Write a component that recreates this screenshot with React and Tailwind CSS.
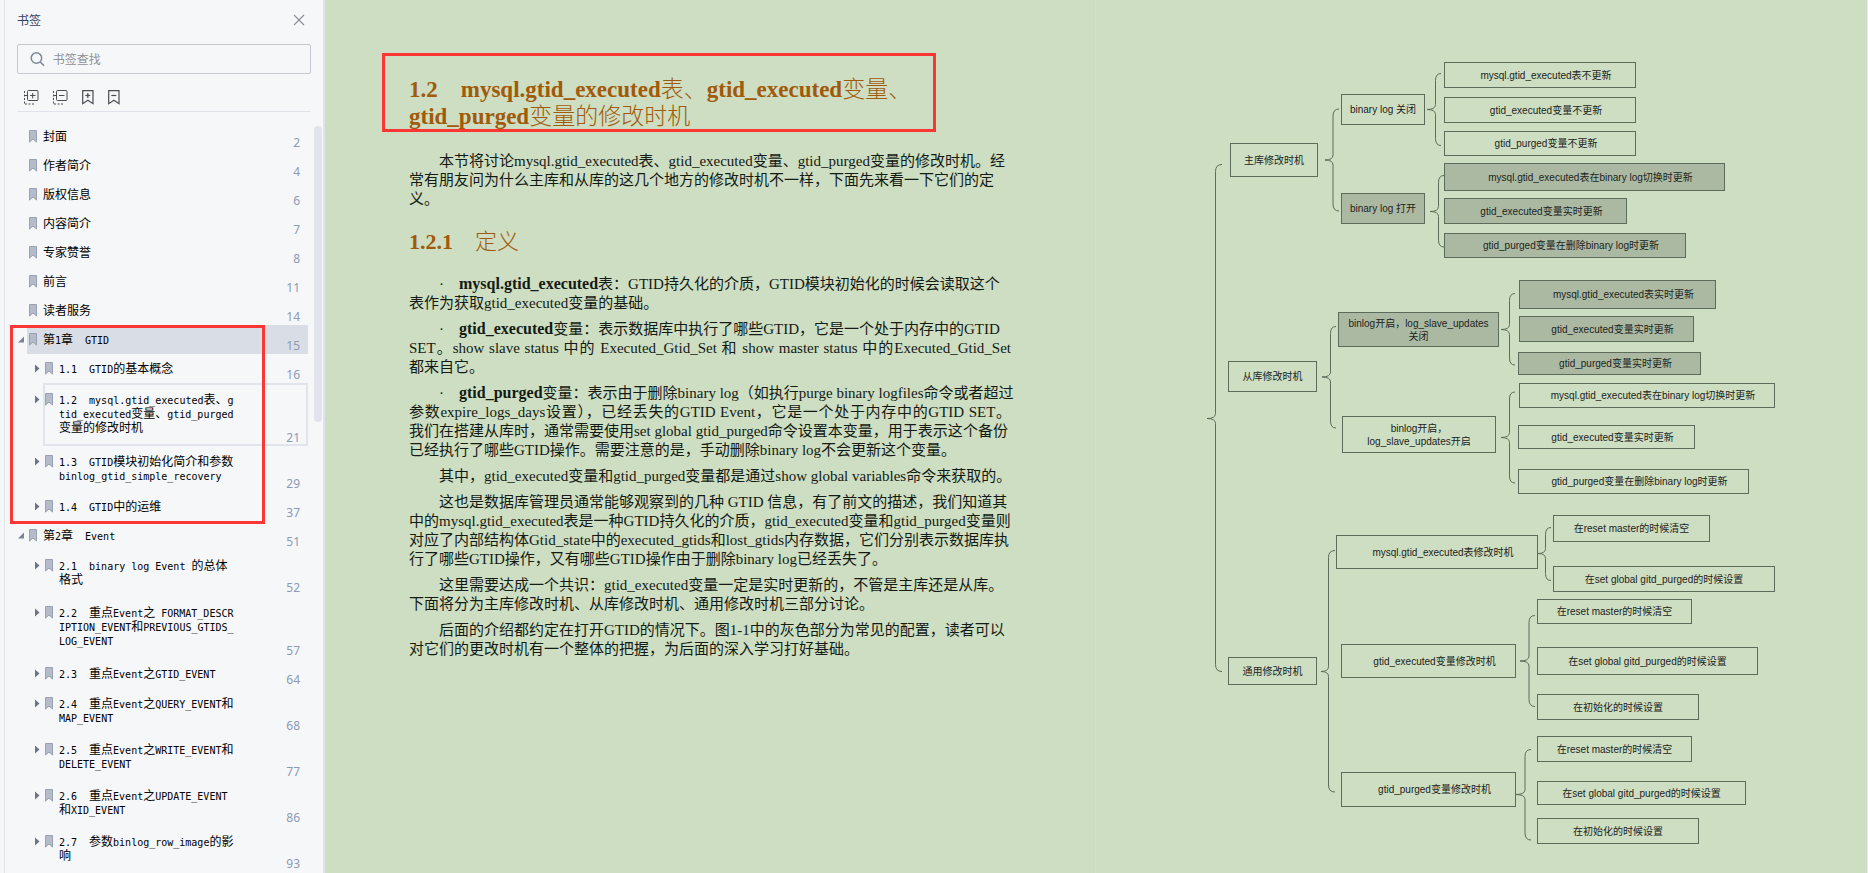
import { useState } from "react";

const bookmarks = [
  { title: "封面", page: 2, lines: 1 },
  { title: "作者简介", page: 4, lines: 1 },
  { title: "版权信息", page: 6, lines: 1 },
  { title: "内容简介", page: 7, lines: 1 },
  { title: "专家赞誉", page: 8, lines: 1 },
  { title: "前言", page: 11, lines: 1 },
  { title: "读者服务", page: 14, lines: 1 },
  {
    title: "第1章　GTID",
    page: 15,
    lines: 1,
    active: true,
    marked: true,
    children: [
      { title: "1.1　GTID的基本概念", page: 16, lines: 1 },
      {
        title: "1.2　mysql.gtid_executed表、gtid_executed变量、gtid_purged变量的修改时机",
        page: 21,
        lines: 3,
        focused: true,
      },
      { title: "1.3　GTID模块初始化简介和参数binlog_gtid_simple_recovery", page: 29, lines: 2 },
      { title: "1.4　GTID中的运维", page: 37, lines: 1 },
    ],
  },
  {
    title: "第2章　Event",
    page: 51,
    lines: 1,
    children: [
      { title: "2.1　binary log Event 的总体格式", page: 52, lines: 2 },
      { title: "2.2　重点Event之 FORMAT_DESCRIPTION_EVENT和PREVIOUS_GTIDS_LOG_EVENT", page: 57, lines: 3 },
      { title: "2.3　重点Event之GTID_EVENT", page: 64, lines: 1 },
      { title: "2.4　重点Event之QUERY_EVENT和MAP_EVENT", page: 68, lines: 2 },
      { title: "2.5　重点Event之WRITE_EVENT和DELETE_EVENT", page: 77, lines: 2 },
      { title: "2.6　重点Event之UPDATE_EVENT和XID_EVENT", page: 86, lines: 2 },
      { title: "2.7　参数binlog_row_image的影响", page: 93, lines: 2 },
    ],
  },
];

const rowHeight = { 1: "h-[29px]", 2: "h-[46px]", 3: "h-[63px]" };
const rowPad = { 1: "pt-2", 2: "pt-[9px]", 3: "pt-[10px]" };

// x, y, w, h on the diagram canvas
const nodes = [
  { x: 30, y: 87, w: 88, h: 34, text: "主库修改时机" },
  { x: 141, y: 38, w: 84, h: 31, text: "binary log 关闭" },
  { x: 141, y: 137, w: 84, h: 31, text: "binary log 打开", gray: true },
  { x: 244, y: 6, w: 192, h: 26, text: "mysql.gtid_executed表不更新", indent: true },
  { x: 244, y: 41, w: 192, h: 26, text: "gtid_executed变量不更新", indent: true },
  { x: 244, y: 75, w: 192, h: 25, text: "gtid_purged变量不更新", indent: true },
  { x: 244, y: 107, w: 281, h: 28, text: "mysql.gtid_executed表在binary log切换时更新", gray: true, indent: true },
  { x: 244, y: 142, w: 183, h: 26, text: "gtid_executed变量实时更新", gray: true, indent: true },
  { x: 244, y: 177, w: 242, h: 25, text: "gtid_purged变量在删除binary log时更新", gray: true, indent: true },

  { x: 28, y: 305, w: 89, h: 31, text: "从库修改时机" },
  { x: 138, y: 256, w: 161, h: 35, text: "binlog开启，log_slave_updates\n关闭", gray: true },
  { x: 142, y: 360, w: 154, h: 37, text: "binlog开启，\nlog_slave_updates开启" },
  { x: 319, y: 224, w: 197, h: 29, text: "mysql.gtid_executed表实时更新", gray: true, indent: true },
  { x: 319, y: 260, w: 175, h: 26, text: "gtid_executed变量实时更新", gray: true, indent: true },
  { x: 318, y: 296, w: 183, h: 23, text: "gtid_purged变量实时更新", gray: true, indent: true },
  { x: 319, y: 327, w: 256, h: 25, text: "mysql.gtid_executed表在binary log切换时更新", indent: true },
  { x: 318, y: 369, w: 177, h: 24, text: "gtid_executed变量实时更新", indent: true },
  { x: 318, y: 413, w: 231, h: 25, text: "gtid_purged变量在删除binary log时更新", indent: true },

  { x: 28, y: 601, w: 89, h: 28, text: "通用修改时机" },
  { x: 136, y: 479, w: 202, h: 34, text: "mysql.gtid_executed表修改时机", indent: true },
  { x: 141, y: 588, w: 175, h: 34, text: "gtid_executed变量修改时机", indent: true },
  { x: 141, y: 716, w: 175, h: 35, text: "gtid_purged变量修改时机", indent: true },
  { x: 353, y: 459, w: 157, h: 27, text: "在reset master的时候清空" },
  { x: 353, y: 510, w: 222, h: 26, text: "在set global gitd_purged的时候设置" },
  { x: 337, y: 543, w: 155, h: 25, text: "在reset master的时候清空" },
  { x: 337, y: 591, w: 221, h: 28, text: "在set global gitd_purged的时候设置" },
  { x: 337, y: 638, w: 162, h: 26, text: "在初始化的时候设置" },
  { x: 337, y: 680, w: 155, h: 26, text: "在reset master的时候清空" },
  { x: 337, y: 725, w: 209, h: 24, text: "在set global gitd_purged的时候设置" },
  { x: 337, y: 762, w: 162, h: 26, text: "在初始化的时候设置" },
];

// tip / spine / end are x values, top / mid / bottom are y values
const brackets = [
  { tip: 7, spine: 15.5, end: 22, top: 108.5, mid: 362.5, bottom: 615.5 },
  { tip: 125, spine: 133, end: 139, top: 53, mid: 104, bottom: 155 },
  { tip: 227, spine: 235.5, end: 241, top: 17.5, mid: 53.5, bottom: 89.5 },
  { tip: 230, spine: 238.5, end: 244, top: 119.5, mid: 155.5, bottom: 191 },
  { tip: 122, spine: 130.5, end: 136, top: 270.5, mid: 321, bottom: 372 },
  { tip: 301, spine: 309.5, end: 315, top: 237.5, mid: 273.5, bottom: 309 },
  { tip: 301, spine: 309.5, end: 315, top: 336, mid: 381.5, bottom: 427 },
  { tip: 121, spine: 128.5, end: 135, top: 494.5, mid: 615.5, bottom: 736 },
  { tip: 338, spine: 345.5, end: 351, top: 471.5, mid: 497.5, bottom: 524.5 },
  { tip: 320, spine: 329, end: 335, top: 559.5, mid: 605, bottom: 650.5 },
  { tip: 316, spine: 325, end: 331, top: 693.5, mid: 738.5, bottom: 784 },
];

function bracketPath({ tip, spine, end, top, mid, bottom }) {
  return [
    `M${end} ${top}`,
    `Q${spine} ${top} ${spine} ${top + 7}`,
    `V${mid - 5}`,
    `Q${spine} ${mid} ${tip} ${mid}`,
    `Q${spine} ${mid} ${spine} ${mid + 5}`,
    `V${bottom - 7}`,
    `Q${spine} ${bottom} ${end} ${bottom}`,
  ].join(" ");
}

function BookmarkIcon() {
  return (
    <svg width="8" height="13" viewBox="0 0 8 13" className="shrink-0">
      <path d="M.5.5h7v11.6L4 9 .5 12.1z" fill="#b5bbc8" stroke="#99a2b2" />
    </svg>
  );
}

function Arrow({ open }) {
  return (
    <svg width="6" height="13" viewBox="0 0 6 13">
      {open ? (
        <path d="M6 3.5V9.500H0z" fill="#7a8394" />
      ) : (
        <path d="M1 2.500 5.500 6.500 1 10.500z" fill="#6b7587" />
      )}
    </svg>
  );
}

// latin characters are half as wide as the chinese ones
function HalfWidth({ text }) {
  return text.split(/([\x20-\x7e]+)/).map((part, i) =>
    i % 2 ? (
      <span key={i} className="font-['DejaVu_Sans_Mono',monospace] text-[10px] leading-none">
        {part}
      </span>
    ) : (
      part
    )
  );
}

function BookmarkRow({ item, level }) {
  return (
    <div className={`flex ${rowHeight[item.lines]}`}>
      <div
        className={`flex shrink-0 items-start justify-end pr-[3px] ${rowPad[item.lines]} ${
          level ? "w-[38px]" : "w-[22px]"
        }`}
      >
        {(level > 0 || item.children) && (
          <button type="button" aria-label="展开">
            <Arrow open={Boolean(item.children)} />
          </button>
        )}
      </div>
      <a
        href="#"
        className={`flex flex-1 items-start gap-1.5 pr-2 pl-0.5 ${rowPad[item.lines]} ${
          item.active ? "bg-[#d9dde5]" : ""
        } ${item.focused ? "ring-2 ring-[#e1e4eb] ring-inset" : ""}`}
      >
        <BookmarkIcon />
        <span className="-mt-px w-[178px] text-xs leading-[14px] break-all text-black">
          <HalfWidth text={item.title} />
        </span>
        <span className="ml-auto self-end font-['Noto_Sans',sans-serif] text-xs leading-4 text-[#8c9ab5]">
          {item.page}
        </span>
      </a>
    </div>
  );
}

function BookmarkTree({ items, level = 0 }) {
  return (
    <ul>
      {items.map((item) => (
        <li key={item.title} className="relative">
          <BookmarkRow item={item} level={level} />
          {item.children && <BookmarkTree items={item.children} level={level + 1} />}
          {item.marked && (
            <div className="pointer-events-none absolute top-0 -bottom-[3px] left-[5px] w-[255px] border-3 border-[#fc3535]" />
          )}
        </li>
      ))}
    </ul>
  );
}

function ToolbarIcon({ name }) {
  if (name === "expand" || name === "collapse") {
    return (
      <svg width="15" height="15" viewBox="0 0 15 15" fill="none" stroke="#4a4d52">
        <rect x="3.500" y=".5" width="10.500" height="10" rx="1" />
        <path d="M.5 1v13.500" strokeDasharray="2 1.500" />
        <path d="M1 5.500h2" />
        <path d="M1 14h10" strokeDasharray="2 1.500" />
        <path d="M6 5.500h5.500" />
        {name === "expand" && <path d="M8.700 3v5.500" />}
      </svg>
    );
  }
  return (
    <svg width="12" height="15" viewBox="0 0 12 15" fill="none" stroke="#4a4d52" strokeWidth="1.200">
      <path d="M.7.700h10.300v13L5.900 10.300.7 13.700z" />
      <path d="M3.300 5.500h5" />
      {name === "add" && <path d="M5.800 3v5" />}
    </svg>
  );
}

const tools = [
  { name: "expand", label: "展开全部" },
  { name: "collapse", label: "收起全部" },
  { name: "add", label: "添加书签" },
  { name: "remove", label: "删除书签" },
];

function Sidebar() {
  const [query, setQuery] = useState("");

  return (
    <aside className="relative w-[325px] shrink-0 border-r-2 border-[#e0e3ea] bg-[#f6f7f9] pl-1 font-['Noto_Sans_CJK_SC',sans-serif]">
      <div className="min-h-full border-l border-[#e0e3ea]">
        <header className="mr-3 ml-3">
          <div className="flex h-[44px] items-center justify-between pr-1.5 pb-1">
            <h1 className="text-xs text-[#33415c]">书签</h1>
            <button type="button" aria-label="关闭">
              <svg width="12" height="12" viewBox="0 0 12 12" stroke="#8b8e94" strokeWidth="1.100">
                <path d="M1 1l10 10M11 1 1 11" />
              </svg>
            </button>
          </div>
          <label className="flex h-[30px] items-center gap-2 rounded-xs border border-[#c6c9cf] pl-3">
            <svg width="16" height="16" viewBox="0 0 16 16" fill="none" stroke="#7e8899" strokeWidth="1.600">
              <circle cx="7" cy="7" r="5.700" />
              <path d="M11.200 11.200l4 4" />
            </svg>
            <input
              type="text"
              aria-label="书签查找"
              placeholder="书签查找"
              value={query}
              onChange={(e) => setQuery(e.target.value)}
              className="w-full bg-transparent text-xs outline-none placeholder:text-[#8f9195]"
            />
          </label>
          <div className="flex h-[38px] items-center gap-[14px] border-b border-[#e0e3ea] pt-[9px] pl-[7px]">
            {tools.map((t) => (
              <button key={t.name} type="button" aria-label={t.label}>
                <ToolbarIcon name={t.name} />
              </button>
            ))}
          </div>
        </header>
        <nav className="mt-2.5 mr-[15px]">
          <BookmarkTree items={bookmarks} />
        </nav>
      </div>
      <div className="absolute top-[126px] right-px h-[296px] w-2 rounded-full bg-[#e1e4ea]" />
    </aside>
  );
}

function Cjk({ children }) {
  return <span className="font-light">{children}</span>;
}

function Term({ children }) {
  return <b className="text-base leading-none">{children}</b>;
}

// a full line, spread over the whole measure
function FullLine({ children }) {
  return <span className="block indent-0 whitespace-normal [text-align-last:justify]">{children}</span>;
}

function Article() {
  return (
    <article className="w-[686px] pt-[76px] pl-[84px] font-['Liberation_Serif','Noto_Sans_CJK_SC',serif] text-[15px] leading-[19px] whitespace-pre text-[#141a14]">
      <div className="relative">
        <h2 className="text-[23px] leading-[27px] font-bold text-[#a05a0a]">
          1.2　mysql.gtid_executed<Cjk>表、</Cjk>gtid_executed<Cjk>变量、</Cjk>
          <br />
          gtid_purged<Cjk>变量的修改时机</Cjk>
        </h2>
        <div className="pointer-events-none absolute -top-[23px] -left-[27px] h-[79px] w-[554px] border-3 border-[#fc3535]" />
      </div>

      <p className="mt-[22px] indent-[30px]">
        {`本节将讨论mysql.gtid_executed表、gtid_executed变量、gtid_purged变量的修改时机。经
常有朋友问为什么主库和从库的这几个地方的修改时机不一样，下面先来看一下它们的定
义。`}
      </p>

      <h3 className="mt-[19px] mb-[20px] text-[22px] leading-[27px] font-bold text-[#a05a0a]">
        1.2.1　<Cjk>定义</Cjk>
      </h3>

      <div className="space-y-[7px]">
        <p className="indent-[30px]">
          ·　<Term>mysql.gtid_executed</Term>
          {`表：GTID持久化的介质，GTID模块初始化的时候会读取这个
表作为获取gtid_executed变量的基础。`}
        </p>
        <p className="indent-[30px]">
          ·　<Term>gtid_executed</Term>
          变量：表示数据库中执行了哪些GTID，它是一个处于内存中的GTID
          <FullLine>
            SET。show slave status 中的 Executed_Gtid_Set 和 show master status 中的Executed_Gtid_Set
          </FullLine>
          都来自它。
        </p>
        <p className="indent-[30px]">
          ·　<Term>gtid_purged</Term>
          变量：表示由于删除binary log（如执行purge binary logfiles命令或者超过
          <FullLine>
            参数expire_logs_days设置），已经丢失的GTID Event，它是一个处于内存中的GTID SET。
          </FullLine>
          {`我们在搭建从库时，通常需要使用set global gtid_purged命令设置本变量，用于表示这个备份
已经执行了哪些GTID操作。需要注意的是，手动删除binary log不会更新这个变量。`}
        </p>
        <p className="indent-[30px]">
          其中，gtid_executed变量和gtid_purged变量都是通过show global variables命令来获取的。
        </p>
        <p className="indent-[30px]">
          {`这也是数据库管理员通常能够观察到的几种 GTID 信息，有了前文的描述，我们知道其
中的mysql.gtid_executed表是一种GTID持久化的介质，gtid_executed变量和gtid_purged变量则
对应了内部结构体Gtid_state中的executed_gtids和lost_gtids内存数据，它们分别表示数据库执
行了哪些GTID操作，又有哪些GTID操作由于删除binary log已经丢失了。`}
        </p>
        <p className="indent-[30px]">
          {`这里需要达成一个共识：gtid_executed变量一定是实时更新的，不管是主库还是从库。
下面将分为主库修改时机、从库修改时机、通用修改时机三部分讨论。`}
        </p>
        <p className="indent-[30px]">
          {`后面的介绍都约定在打开GTID的情况下。图1-1中的灰色部分为常见的配置，读者可以
对它们的更改时机有一个整体的把握，为后面的深入学习打好基础。`}
        </p>
      </div>
    </article>
  );
}

function Diagram() {
  return (
    <figure className="relative mt-[56px] ml-[104px] h-[800px] w-[580px] font-['Liberation_Sans','Noto_Sans_CJK_SC',sans-serif] text-[10px] leading-[13px] text-[#1c241c]">
      <svg width="580" height="800" viewBox="0 0 580 800" fill="none" stroke="#5d6b5a" className="absolute inset-0">
        {brackets.map((b, i) => (
          <path key={i} d={bracketPath(b)} />
        ))}
      </svg>
      {nodes.map((n, i) => (
        <div
          key={i}
          style={{ left: n.x, top: n.y, width: n.w, height: n.h }}
          className={`absolute flex items-center justify-center border border-[#5d6b5a] text-center whitespace-pre ${
            n.gray ? "bg-[#abb9a3]" : ""
          } ${n.indent ? "pl-3" : ""}`}
        >
          {n.text}
        </div>
      ))}
    </figure>
  );
}

export default function App() {
  return (
    <div className="flex min-h-screen">
      <Sidebar />
      <main className="grid flex-1 grid-cols-2 border-r border-[#e6ede0] bg-[#cddec2]">
        <section className="border-r border-[#d2e1c8]">
          <Article />
        </section>
        <section>
          <Diagram />
        </section>
      </main>
    </div>
  );
}
